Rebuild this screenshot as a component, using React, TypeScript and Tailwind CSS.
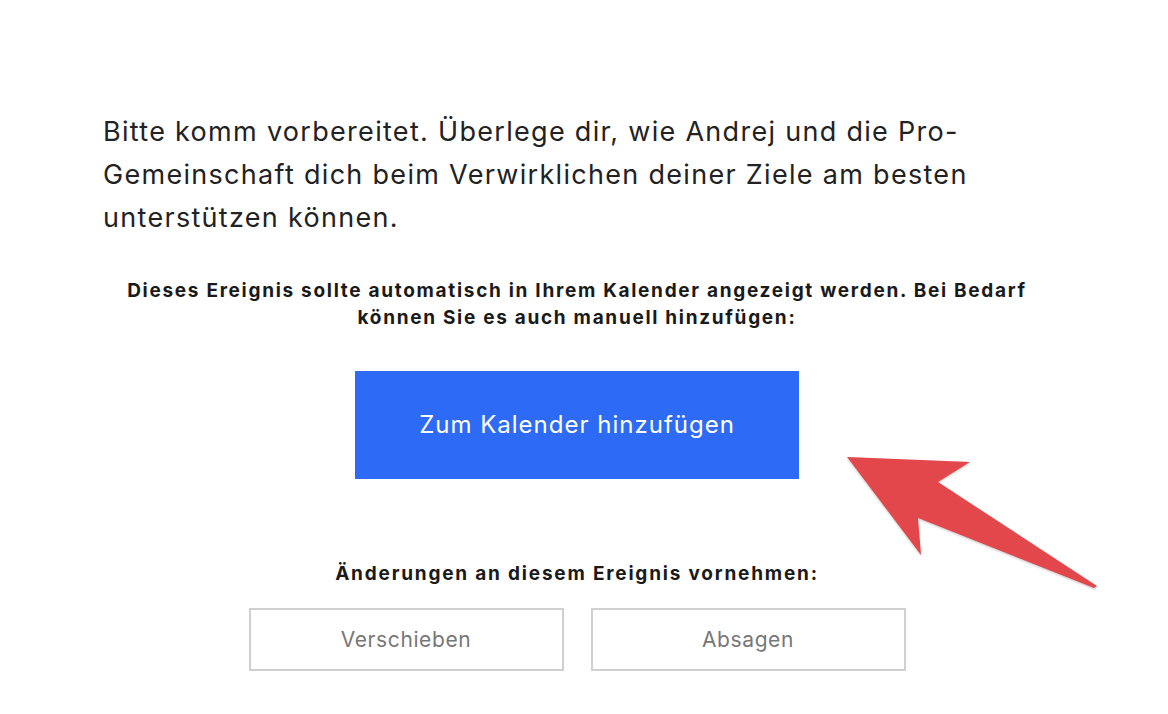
import React from "react";

export default function App() {
  return (
    <div
      className="relative w-[1168px] h-[714px] bg-white overflow-hidden text-[#1f1f1f]"
      style={{ fontFamily: 'Inter, "Open Sans", sans-serif' }}
    >
      <div className="w-[948px] ml-[103px] pt-[110px] flex flex-col items-center">
        <p className="self-stretch text-[27px] leading-[43px] tracking-[1.3px] text-[#222]">
          Bitte komm vorbereitet. Überlege dir, wie Andrej und die Pro-
          <br />
          Gemeinschaft dich beim Verwirklichen deiner Ziele am besten
          <br />
          unterstützen können.
        </p>
        <p className="mt-[38px] text-center text-[19px] leading-[27px] font-bold tracking-[1.7px] text-[#1a1a1a] whitespace-nowrap">
          Dieses Ereignis sollte automatisch in Ihrem Kalender angezeigt werden. Bei Bedarf
          <br />
          können Sie es auch manuell hinzufügen:
        </p>
        <button className="mt-[40px] w-[444px] h-[108px] bg-[#2d6af6] text-white text-[24px] tracking-[1px]">
          Zum Kalender hinzufügen
        </button>
        <p className="mt-[82px] text-[19px] leading-[26px] font-bold tracking-[1.8px] text-[#1a1a1a]">
          Änderungen an diesem Ereignis vornehmen:
        </p>
        <div className="mt-[21px] flex gap-[27px]">
          <button className="w-[315px] h-[63px] border-2 border-[#d0d0d0] text-[21px] tracking-[0.6px] text-[#777]">
            Verschieben
          </button>
          <button className="w-[315px] h-[63px] border-2 border-[#d0d0d0] text-[21px] tracking-[0.6px] text-[#777]">
            Absagen
          </button>
        </div>
      </div>
      <svg
        className="absolute left-0 top-0 pointer-events-none"
        width="1168"
        height="714"
        viewBox="0 0 1168 714"
      >
        <defs>
          <filter id="sh" x="-10%" y="-10%" width="120%" height="120%">
            <feDropShadow dx="0" dy="1" stdDeviation="1.2" floodColor="#000" floodOpacity="0.25" />
          </filter>
        </defs>
        <polygon
          points="847,457 970,462 938,482 1097,586 1094,588 918,518 921,555"
          fill="#e2474b"
          filter="url(#sh)"
        />
      </svg>
    </div>
  );
}
